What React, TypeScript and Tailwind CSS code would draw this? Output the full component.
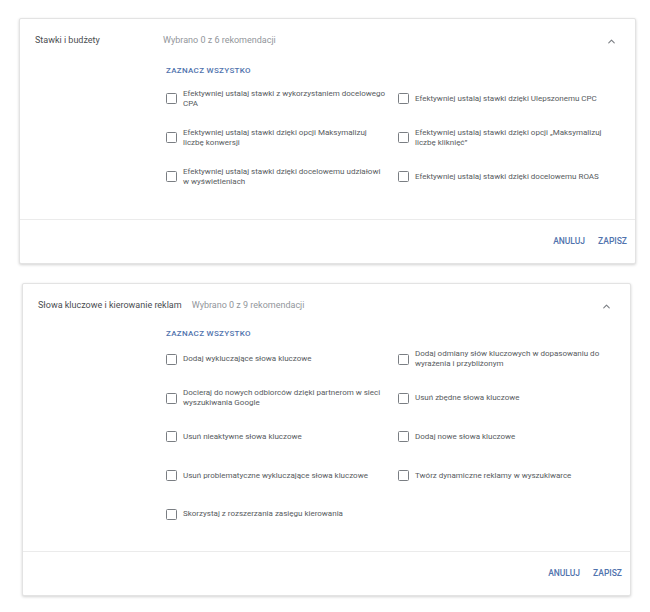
import { ChevronUp } from 'lucide-react';

type Item = { lines: string[] };

type Section = {
  title: string;
  subtitle: string;
  items: Item[][];
  cardClass: string;
  bodyClass: string;
  selectClass: string;
  rowClass: string;
};

const sections: Section[] = [
  {
    title: 'Stawki i budżety',
    subtitle: 'Wybrano 0 z 6 rekomendacji',
    cardClass: 'ml-[19px] w-[617px]',
    bodyClass: 'pl-[146px] pb-[23px]',
    selectClass: 'h-[16px]',
    rowClass: 'h-[39px]',
    items: [
      [
        { lines: ['Efektywniej ustalaj stawki z wykorzystaniem docelowego', 'CPA'] },
        { lines: ['Efektywniej ustalaj stawki dzięki Ulepszonemu CPC'] },
      ],
      [
        { lines: ['Efektywniej ustalaj stawki dzięki opcji Maksymalizuj', 'liczbę konwersji'] },
        { lines: ['Efektywniej ustalaj stawki dzięki opcji „Maksymalizuj', 'liczbę kliknięć”'] },
      ],
      [
        { lines: ['Efektywniej ustalaj stawki dzięki docelowemu udziałowi', 'w wyświetleniach'] },
        { lines: ['Efektywniej ustalaj stawki dzięki docelowemu ROAS'] },
      ],
    ],
  },
  {
    title: 'Słowa kluczowe i kierowanie reklam',
    subtitle: 'Wybrano 0 z 9 rekomendacji',
    cardClass: 'ml-[22px] w-[609px]',
    bodyClass: 'pl-[143px] pb-[17px]',
    selectClass: 'h-[12px]',
    rowClass: 'h-[38.75px]',
    items: [
      [
        { lines: ['Dodaj wykluczające słowa kluczowe'] },
        { lines: ['Dodaj odmiany słów kluczowych w dopasowaniu do', 'wyrażenia i przybliżonym'] },
      ],
      [
        { lines: ['Docieraj do nowych odbiorców dzięki partnerom w sieci', 'wyszukiwania Google'] },
        { lines: ['Usuń zbędne słowa kluczowe'] },
      ],
      [
        { lines: ['Usuń nieaktywne słowa kluczowe'] },
        { lines: ['Dodaj nowe słowa kluczowe'] },
      ],
      [
        { lines: ['Usuń problematyczne wykluczające słowa kluczowe'] },
        { lines: ['Twórz dynamiczne reklamy w wyszukiwarce'] },
      ],
      [
        { lines: ['Skorzystaj z rozszerzania zasięgu kierowania'] },
      ],
    ],
  },
];

function Checkbox() {
  return <span className="block w-[11px] h-[11px] shrink-0 border-[1.5px] border-[#7a7e83] rounded-[1.5px] bg-white" />;
}

function Recommendation({ item }: { item: Item }) {
  return (
    <label className="flex items-center gap-[6px] cursor-pointer">
      <Checkbox />
      <span className="text-[8px] leading-[10px] text-[#575b60] whitespace-nowrap">
        {item.lines.map((line, i) => (
          <span key={i} className="block">{line}</span>
        ))}
      </span>
    </label>
  );
}

function Card({ section }: { section: Section }) {
  return (
    <div className={`${section.cardClass} bg-white border border-[#e3e3e3] rounded-[2px] shadow-[0_1px_3px_rgba(0,0,0,0.18)]`}>
      <div className="h-[44px] flex items-center pl-[15px] pr-[18px]">
        <div className="min-w-[118px] mr-[10px] text-[9px] text-[#4a4d51]">{section.title}</div>
        <div className="flex-grow text-[9px] text-[#92969b]">{section.subtitle}</div>
        <ChevronUp size={11} strokeWidth={2.4} className="text-[#7a7e83]" />
      </div>
      <div className={section.bodyClass}>
        <div className={`${section.selectClass} flex items-center`}>
          <button className="text-[8px] font-medium tracking-[0.04em] text-[#5073ad] uppercase">
            Zaznacz wszystko
          </button>
        </div>
        {section.items.map((row, r) => (
          <div key={r} className={`${section.rowClass} grid grid-cols-[232px_1fr] items-center`}>
            {row.map((item, i) => (
              <Recommendation key={i} item={item} />
            ))}
          </div>
        ))}
      </div>
      <div className="h-[44px] border-t border-[#ebebeb] flex items-center justify-end gap-[13px] pr-[8px]">
        <button className="text-[8.5px] font-medium text-[#5073ad]">ANULUJ</button>
        <button className="text-[8.5px] font-medium text-[#5073ad]">ZAPISZ</button>
      </div>
    </div>
  );
}

export default function App() {
  return (
    <div className="w-[650px] h-[612px] bg-white pt-[18px] flex flex-col gap-[19px] font-['Roboto',sans-serif]">
      {sections.map((s, i) => (
        <Card key={i} section={s} />
      ))}
    </div>
  );
}
